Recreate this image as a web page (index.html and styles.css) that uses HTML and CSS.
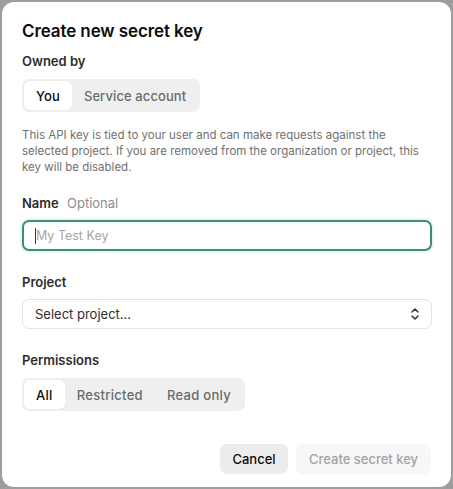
FILE: index.html
```html
<!DOCTYPE html>
<html>
<head>
<meta charset="utf-8">
<link rel="stylesheet" href="styles.css">
</head>
<body>
<div class="dialog">
  <h1 class="title">Create new secret key</h1>
  <div class="label">Owned by</div>
  <div class="seg seg-owner">
    <span class="seg-item active">You</span>
    <span class="seg-item">Service account</span>
  </div>
  <p class="desc">This API key is tied to your user and can make requests against the selected project. If you are removed from the organization or project, this key will be disabled.</p>
  <div class="label label-name">Name <span class="optional">Optional</span></div>
  <div class="input focused"><span class="caret"></span><span class="placeholder">My Test Key</span></div>
  <div class="label label-project">Project</div>
  <div class="input select"><span class="select-text">Select project...</span>
    <svg class="chev" width="10" height="14" viewBox="0 0 10 14" fill="none" stroke="#333" stroke-width="1.5" stroke-linecap="round" stroke-linejoin="round"><path d="M2 5 L5 2 L8 5"/><path d="M2 9 L5 12 L8 9"/></svg>
  </div>
  <div class="label label-perm">Permissions</div>
  <div class="seg seg-perm">
    <span class="seg-item active">All</span>
    <span class="seg-item">Restricted</span>
    <span class="seg-item">Read only</span>
  </div>
  <div class="actions">
    <button class="btn btn-cancel">Cancel</button>
    <button class="btn btn-create">Create secret key</button>
  </div>
</div>
</body>
</html>
```
FILE: styles.css
```css
* { box-sizing: border-box; }
html, body { margin: 0; padding: 0; }
body {
  background: #9d9d9d;
  width: 453px;
  height: 489px;
  overflow: hidden;
  padding: 2px 2px 0 2px;
  font-family: Inter, "Liberation Sans", sans-serif;
}
.dialog {
  background: #fff;
  border-radius: 12px;
  width: 449px;
  height: 485px;
  padding: 18px 20px 0 20px;
  display: flex;
  flex-direction: column;
  align-items: flex-start;
}
.title {
  margin: 0;
  font-size: 17px;
  font-weight: 600;
  color: #0d0d0d;
  line-height: 22px;
  letter-spacing: -0.1px;
}
.label {
  font-size: 13px;
  font-weight: 600;
  color: #2d2d2d;
  line-height: 16px;
  margin-top: 11px;
}
.label-name { margin-top: 1px; }
.label-project { margin-top: 23px; }
.label-perm { margin-top: 23px; }
.optional { font-weight: 400; color: #8e8e8e; margin-left: 5px; }
.seg {
  margin-top: 10px;
  display: flex;
  background: #efeff0;
  border-radius: 7px;
  padding: 2px;
  height: 33px;
}
.seg-item {
  display: flex;
  align-items: center;
  padding: 0 12px;
  font-size: 13px;
  font-weight: 500;
  letter-spacing: 0.2px;
  color: #6b6b6b;
  border-radius: 5px;
}
.seg-owner .seg-item { letter-spacing: 0.1px; }
.seg-perm .seg-item { letter-spacing: 0.3px; }
.seg-item.active {
  background: #fff;
  color: #0d0d0d;
  box-shadow: 0 0 1px rgba(0,0,0,0.15);
}
.desc {
  margin: 15px 0 0 0;
  font-size: 11.5px;
  line-height: 16px;
  color: #707070;
  width: 404px;
  height: 67px;
}
.input {
  margin-top: 9px;
  width: 410px;
  height: 31px;
  border: 1px solid #e3e3e3;
  border-radius: 7px;
  display: flex;
  align-items: center;
  padding: 0 12px;
  font-size: 13px;
}
.input.focused {
  border: 2px solid #3c8e6e;
  padding: 0 11px;
  box-shadow: 0 0 0 2px rgba(60,180,150,0.12);
}
.caret {
  width: 1px;
  height: 16px;
  background: #333;
}
.placeholder { color: #a6a6a6; font-size: 12.5px; }
.select { height: 30px; justify-content: space-between; }
.select-text { color: #2d2d2d; }
.chev { margin-right: -1px; }
.actions {
  margin-top: 33px;
  align-self: flex-end;
  display: flex;
  gap: 8px;
}
.btn {
  font-family: inherit;
  font-size: 13px;
  font-weight: 500;
  border: none;
  border-radius: 7px;
  height: 30px;
  padding: 0 12px;
}
.btn-cancel { background: #ececec; color: #0d0d0d; width: 68px; }
.btn-create { background: #f7f7f7; color: #a3a3a3; width: 135px; }
```
